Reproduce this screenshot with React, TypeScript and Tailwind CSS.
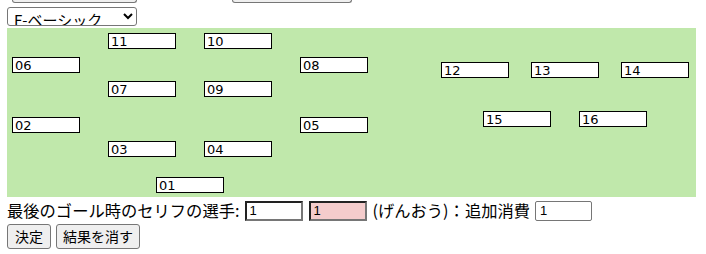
const players = [
  { no: "11", pos: "left-[101px] top-[5px]" },
  { no: "10", pos: "left-[197px] top-[5px]" },
  { no: "06", pos: "left-[5px] top-[29px]" },
  { no: "08", pos: "left-[293px] top-[29px]" },
  { no: "07", pos: "left-[101px] top-[53px]" },
  { no: "09", pos: "left-[197px] top-[53px]" },
  { no: "12", pos: "left-[434px] top-[34px]" },
  { no: "13", pos: "left-[524px] top-[34px]" },
  { no: "14", pos: "left-[614px] top-[34px]" },
  { no: "15", pos: "left-[476px] top-[83px]" },
  { no: "16", pos: "left-[572px] top-[83px]" },
  { no: "02", pos: "left-[5px] top-[89px]" },
  { no: "05", pos: "left-[293px] top-[89px]" },
  { no: "03", pos: "left-[101px] top-[113px]" },
  { no: "04", pos: "left-[197px] top-[113px]" },
  { no: "01", pos: "left-[149px] top-[149px]" },
];

const jp = "font-['Noto_Sans_CJK_JP',sans-serif]";

export default function App() {
  return (
    <div className={`w-[706px] h-[254px] overflow-hidden bg-white px-[7px] text-black ${jp}`}>
      {/* controls scrolled above the view, only their bottom edges show */}
      <div className="flex h-[3px]">
        <div className="ml-[5px] w-[125px] h-[3px] border-x border-b border-[#767676] rounded-b-[3px] bg-[#efefef]" />
        <div className="ml-[95px] w-[120px] h-[3px] border-x border-b border-[#767676] rounded-b-[3px] bg-[#efefef]" />
      </div>

      <select
        defaultValue="basic"
        className="mt-[4px] block w-[130px] h-[19px] border border-[#767676] rounded-[3px] bg-white text-[15px] leading-[17px] pl-[2px]"
      >
        <option value="basic">F-ベーシック</option>
      </select>

      <div className="relative mt-[2px] w-[689px] h-[169px] bg-[#c0e8ab]">
        {players.map((p) => (
          <input
            key={p.no}
            readOnly
            defaultValue={p.no}
            className={`absolute ${p.pos} w-[68px] h-[16px] border border-black bg-white px-[2px] text-[13px] leading-[14px] font-['DejaVu_Sans',sans-serif] outline-none`}
          />
        ))}
      </div>

      <div className="mt-[2px] flex items-center h-[23px] text-[16.3px]">
        <span>最後のゴール時のセリフの選手:</span>
        <input
          readOnly
          defaultValue="1"
          className="ml-[6px] w-[58px] h-[20px] border-2 border-t-[#222] border-l-[#222] border-b-[#767676] border-r-[#767676] bg-white px-[2px] text-[13px] font-['Liberation_Sans',sans-serif] outline-none"
        />
        <input
          readOnly
          defaultValue="1"
          className="ml-[6px] w-[58px] h-[20px] border-2 border-t-[#222] border-l-[#222] border-b-[#767676] border-r-[#767676] bg-[#f4cccc] px-[2px] text-[13px] font-['Liberation_Sans',sans-serif] outline-none"
        />
        <span className="ml-[5px]">(げんおう)：追加消費</span>
        <input
          readOnly
          defaultValue="1"
          className="ml-[5px] w-[57px] h-[20px] border border-[#767676] rounded-[2px] bg-white px-[4px] text-[13px] font-['Liberation_Sans',sans-serif] outline-none"
        />
      </div>

      <div className="mt-[2px] flex gap-[5px]">
        <button className="h-[25px] px-[7px] border border-[#767676] rounded-[3px] bg-[#efefef] text-[14px]">
          決定
        </button>
        <button className="h-[25px] px-[6px] border border-[#767676] rounded-[3px] bg-[#efefef] text-[14px]">
          結果を消す
        </button>
      </div>
    </div>
  );
}
